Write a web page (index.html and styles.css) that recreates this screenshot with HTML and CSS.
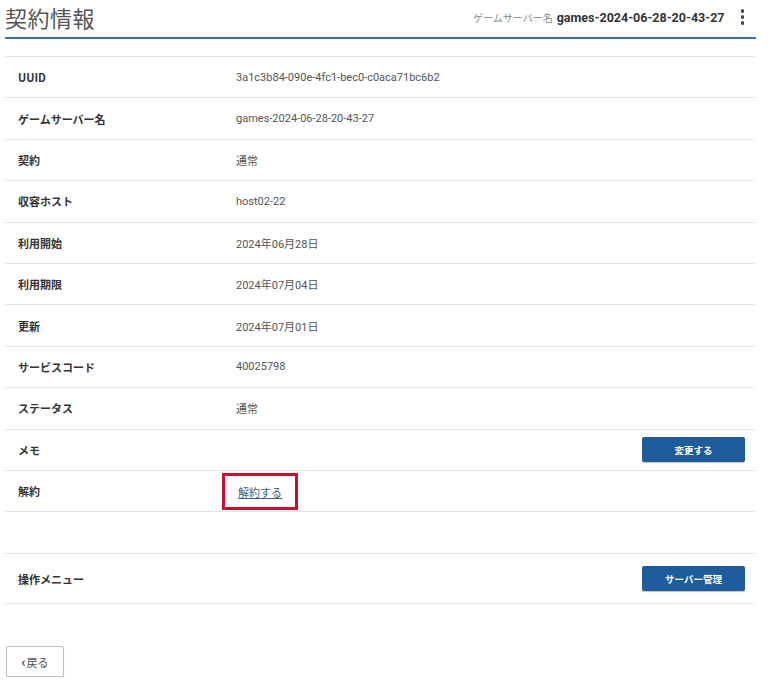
FILE: index.html
```html
<!DOCTYPE html>
<html lang="ja">
<head>
<meta charset="utf-8">
<link rel="stylesheet" href="styles.css">
</head>
<body>
<div class="page">
  <header class="head">
    <h1 class="title">契約情報</h1>
    <div class="server">
      <span class="server-label">ゲームサーバー名</span>
      <span class="server-name">games-2024-06-28-20-43-27</span>
      <span class="kebab"><i></i><i></i><i></i></span>
    </div>
  </header>
  <div class="spacer-top"></div>
  <div class="table">
    <div class="row"><div class="k">UUID</div><div class="v">3a1c3b84-090e-4fc1-bec0-c0aca71bc6b2</div></div>
    <div class="row"><div class="k">ゲームサーバー名</div><div class="v">games-2024-06-28-20-43-27</div></div>
    <div class="row"><div class="k">契約</div><div class="v">通常</div></div>
    <div class="row"><div class="k">収容ホスト</div><div class="v">host02-22</div></div>
    <div class="row"><div class="k">利用開始</div><div class="v">2024年06月28日</div></div>
    <div class="row"><div class="k">利用期限</div><div class="v">2024年07月04日</div></div>
    <div class="row"><div class="k">更新</div><div class="v">2024年07月01日</div></div>
    <div class="row"><div class="k">サービスコード</div><div class="v">40025798</div></div>
    <div class="row"><div class="k">ステータス</div><div class="v">通常</div></div>
    <div class="row"><div class="k">メモ</div><div class="v"></div><button class="btn">変更する</button></div>
    <div class="row"><div class="k">解約</div><div class="v"><span class="hl"><a class="link" href="#">解約する</a></span></div></div>
  </div>
  <div class="gap"></div>
  <div class="table">
    <div class="row tall"><div class="k">操作メニュー</div><div class="v"></div><button class="btn">サーバー管理</button></div>
  </div>
  <button class="back"><span class="chev">‹</span>戻る</button>
</div>
</body>
</html>
```
FILE: styles.css
```css
* { box-sizing: border-box; }
body {
  margin: 0;
  background: #fff;
  font-family: Roboto, "Liberation Sans", "Noto Sans CJK JP", sans-serif;
  color: #333;
}
.page {
  margin: 0 12px 0 5px;
}
.head {
  height: 39px;
  display: flex;
  align-items: flex-start;
  justify-content: space-between;
  border-bottom: 2px solid #3d6f9f;
}
.title {
  margin: 0;
  padding-top: 2px;
  font-family: "Noto Sans CJK JP", sans-serif;
  font-weight: 400;
  font-size: 22px;
  line-height: 30px;
  color: #555;
  letter-spacing: 0.5px;
}
.server {
  display: flex;
  align-items: center;
  height: 34px;
  padding-right: 12px;
}
.server-label {
  font-family: "Noto Sans CJK JP", sans-serif;
  font-size: 10px;
  color: #888;
  margin-right: 4px;
}
.server-name {
  font-weight: 700;
  font-size: 12.5px;
  color: #333;
}
.kebab {
  display: flex;
  flex-direction: column;
  gap: 2.5px;
  margin-left: 16px;
}
.kebab i {
  display: block;
  width: 3.5px;
  height: 3.5px;
  border-radius: 50%;
  background: #444;
}
.spacer-top { height: 17px; }
.table {
  border-top: 1px solid #e1e4e7;
  margin-right: 1px;
}
.row {
  display: flex;
  align-items: center;
  height: 41.4px;
  border-bottom: 1px solid #e1e4e7;
}
.row.tall { height: 50px; }
.k {
  width: 231px;
  padding-left: 13px;
  font-family: "Noto Sans CJK JP", sans-serif;
  font-weight: 700;
  font-size: 11px;
  color: #333;
}
.v {
  flex: 1;
  font-size: 11px;
  color: #555;
}
.btn {
  width: 103px;
  height: 25px;
  margin-right: 10px;
  border: none;
  border-radius: 2px;
  background: #1f5c9c;
  box-shadow: 0 1px 1px rgba(0,0,0,0.25);
  color: #fff;
  font-family: "Noto Sans CJK JP", sans-serif;
  font-weight: 700;
  font-size: 9.5px;
}
.hl {
  display: inline-block;
  margin-left: -14px;
  padding: 8px 13px 7px 13px;
  border: 3px solid #c8102e;
}
.link {
  font-family: "Noto Sans CJK JP", sans-serif;
  font-size: 11px;
  color: #3e5f80;
  text-decoration: underline;
}
.gap { height: 41px; }
.back {
  margin-top: 42px;
  margin-left: 1px;
  width: 58px;
  height: 31px;
  background: #fff;
  border: 1px solid #b7c0c9;
  border-radius: 2px;
  box-shadow: 0 1px 1px rgba(0,0,0,0.12);
  font-family: "Noto Sans CJK JP", sans-serif;
  font-size: 11px;
  color: #555;
  padding: 0;
}
.chev {
  font-weight: 700;
  font-size: 13px;
  margin-right: 1px;
  color: #444;
}
```
